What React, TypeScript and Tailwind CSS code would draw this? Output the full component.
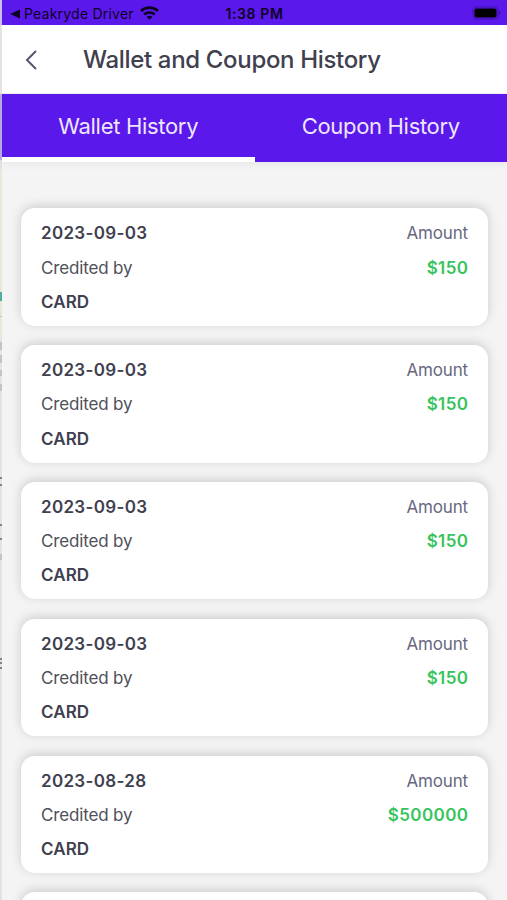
import React from "react";

const transactions = [
  { date: "2023-09-03", method: "CARD", amount: "$150" },
  { date: "2023-09-03", method: "CARD", amount: "$150" },
  { date: "2023-09-03", method: "CARD", amount: "$150" },
  { date: "2023-09-03", method: "CARD", amount: "$150" },
  { date: "2023-08-28", method: "CARD", amount: "$500000" },
];

function StatusBar() {
  return (
    <div className="grid h-[25px] shrink-0 grid-cols-[1fr_auto_1fr] items-center bg-[#5b18eb] pt-[3px] text-[14px] leading-5 text-[#0d0327]">
      <div className="flex items-center pl-2">
        <svg width="10" height="10" viewBox="0 0 10 10" fill="currentColor">
          <path d="M0 5 10 0.6v8.8z" />
        </svg>
        <span className="ml-[4px] tracking-[0.22px]">Peakryde Driver</span>
        <svg className="ml-[6px] -mt-0.5" width="19" height="14" viewBox="0 0 19 14" fill="none" stroke="currentColor" strokeWidth="2.7">
          <path d="M1 5C5.8.6 13.2.6 18 5" />
          <path d="M4.2 8.5c3-2.7 7.6-2.7 10.6 0" />
          <path d="M6.6 10.8c1.6-1.4 4.2-1.4 5.8 0L9.5 13.8z" fill="currentColor" stroke="none" />
        </svg>
      </div>
      <span className="font-semibold tracking-[0.6px]">1:38 PM</span>
      <svg className="mr-[5px] -mt-0.5 justify-self-end" width="30" height="14" viewBox="0 0 30 14">
        <rect x="1" y="1" width="25" height="12" rx="3.5" fill="none" stroke="#3d10a0" strokeWidth="1" />
        <rect x="2.5" y="2.5" width="22" height="9" rx="2" fill="#000" />
        <path d="M27.3 4.8c1.6.6 1.6 3.8 0 4.4z" fill="#3d10a0" />
      </svg>
    </div>
  );
}

export default function WalletHistory() {
  return (
    <div className="flex h-[900px] w-[507px] overflow-hidden bg-[#f4f4f4] font-['Inter','Liberation_Sans',sans-serif]">
      {/* Edge of the window behind */}
      <svg className="shrink-0" width="2" height="900" viewBox="0 0 2 900">
        <rect width="2" height="900" fill="#e3e3e6" />
        <rect width="2" height="25" fill="#c9c1ea" />
        <rect y="94" width="2" height="66" fill="#b9aee6" />
        <rect y="170" width="2" height="170" fill="#e9e6dc" />
        <rect y="292" width="2" height="9" fill="#4dae9d" />
        <rect y="316" width="2" height="1" fill="#c8c5ae" />
        <path d="M1 342v8M1 355v8M1 370v6M1 384v7M1 554v6" stroke="#c4c4c8" strokeWidth="2" />
        <path d="M0 478h2M0 485h2M0 525h2M0 539h2M0 659h2M0 663h2M0 668h2" stroke="#66666a" strokeWidth="1.5" />
      </svg>

      <div className="flex min-w-0 flex-1 flex-col">
        <StatusBar />

        {/* Header */}
        <div className="flex h-[69px] shrink-0 items-center border-b border-[#f0f0f2] bg-white pt-[2px]">
          <svg className="ml-[23px]" width="14" height="20" viewBox="0 0 14 20" fill="none" stroke="#55556f" strokeWidth="2">
            <path d="M11 1 2 10l9 9" />
          </svg>
          <h1 className="ml-[44px] text-[24px] leading-8 font-medium tracking-[-0.33px] text-[#40404f]">
            Wallet and Coupon History
          </h1>
        </div>

        {/* Tabs */}
        <div className="grid h-[68px] shrink-0 grid-cols-2 bg-[#5b18eb] text-[22px] leading-[62px] tracking-[-0.31px] text-[#eee6fd] shadow-[0_2px_8px_rgba(0,0,0,0.06)]">
          <button className="border-b-[5px] border-white pt-px text-center">Wallet History</button>
          <button className="pt-px pb-[5px] text-center">Coupon History</button>
        </div>

        {/* Transactions */}
        <div className="flex flex-col gap-[19.4px] pt-[46.4px] pr-[19px] pl-[19px]">
          {transactions.map((item, i) => (
            <div
              key={i}
              className="flex h-[117.4px] shrink-0 justify-between rounded-[14px] bg-white px-5 pt-[8px] text-[17px] leading-[34.2px] shadow-[0_-2px_11px_rgba(0,0,0,0.17)]"
            >
              <div className="text-[#40404f]">
                <p className="font-semibold tracking-[0.32px]">{item.date}</p>
                <p className="tracking-[-0.15px] text-[#505058]">Credited by</p>
                <p className="font-semibold tracking-[0.1px]">{item.method}</p>
              </div>
              <div className="text-right">
                <p className="tracking-[-0.15px] text-[#68687f]">Amount</p>
                <p className="-mr-[0.4px] font-semibold tracking-[0.4px] text-[#37c45c]">{item.amount}</p>
              </div>
            </div>
          ))}
          {/* Next card, still below the fold */}
          <div className="h-[117.4px] shrink-0 rounded-[14px] bg-white shadow-[0_-2px_11px_rgba(0,0,0,0.17)]" />
        </div>
      </div>
    </div>
  );
}
